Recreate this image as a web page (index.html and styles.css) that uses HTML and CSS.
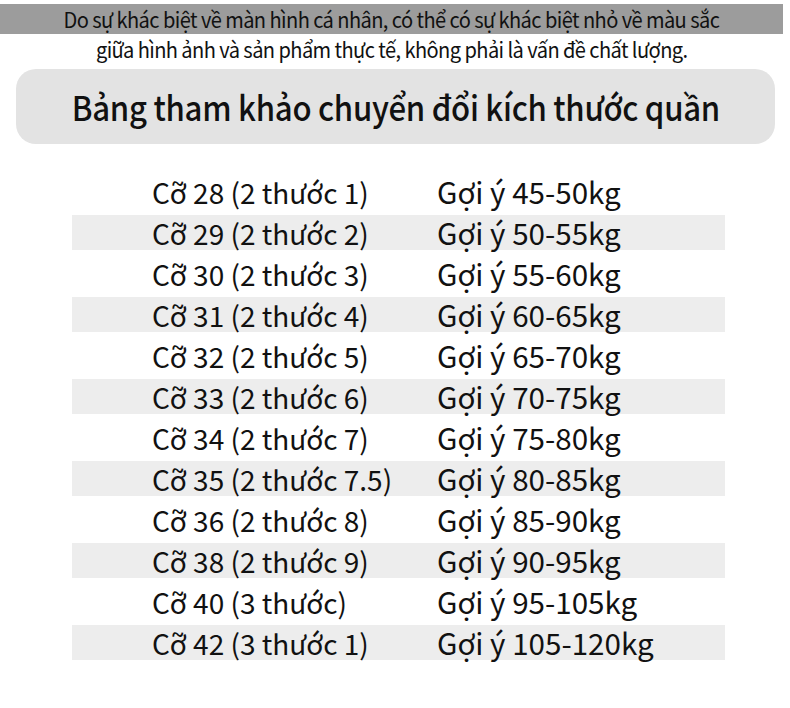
FILE: index.html
```html
<!DOCTYPE html>
<html lang="vi">
<head>
<meta charset="utf-8">
<link rel="stylesheet" href="styles.css">
</head>
<body>
<div class="notice">
  <div class="line line-dark"><span class="squeeze">Do sự khác biệt về màn hình cá nhân, có thể có sự khác biệt nhỏ về màu sắc</span></div>
  <div class="line"><span class="squeeze">giữa hình ảnh và sản phẩm thực tế, không phải là vấn đề chất lượng.</span></div>
</div>
<div class="title-box"><h1 class="title">Bảng tham khảo chuyển đổi kích thước quần</h1></div>
<div class="table">
  <div class="row"><span class="c1">Cỡ 28 (2 thước 1)</span><span class="c2">Gợi ý 45-50kg</span></div>
  <div class="row alt"><span class="c1">Cỡ 29 (2 thước 2)</span><span class="c2">Gợi ý 50-55kg</span></div>
  <div class="row"><span class="c1">Cỡ 30 (2 thước 3)</span><span class="c2">Gợi ý 55-60kg</span></div>
  <div class="row alt"><span class="c1">Cỡ 31 (2 thước 4)</span><span class="c2">Gợi ý 60-65kg</span></div>
  <div class="row"><span class="c1">Cỡ 32 (2 thước 5)</span><span class="c2">Gợi ý 65-70kg</span></div>
  <div class="row alt"><span class="c1">Cỡ 33 (2 thước 6)</span><span class="c2">Gợi ý 70-75kg</span></div>
  <div class="row"><span class="c1">Cỡ 34 (2 thước 7)</span><span class="c2">Gợi ý 75-80kg</span></div>
  <div class="row alt"><span class="c1">Cỡ 35 (2 thước 7.5)</span><span class="c2">Gợi ý 80-85kg</span></div>
  <div class="row"><span class="c1">Cỡ 36 (2 thước 8)</span><span class="c2">Gợi ý 85-90kg</span></div>
  <div class="row alt"><span class="c1">Cỡ 38 (2 thước 9)</span><span class="c2">Gợi ý 90-95kg</span></div>
  <div class="row"><span class="c1">Cỡ 40 (3 thước)</span><span class="c2">Gợi ý 95-105kg</span></div>
  <div class="row alt"><span class="c1">Cỡ 42 (3 thước 1)</span><span class="c2">Gợi ý 105-120kg</span></div>
</div>
</body>
</html>
```
FILE: styles.css
```css
html, body {
  margin: 0;
  padding: 0;
  background: #ffffff;
}
body {
  width: 790px;
  height: 708px;
  overflow: hidden;
  font-family: "Noto Sans CJK JP", "Noto Sans", sans-serif;
  color: #111111;
}
.notice {
  margin-top: 4px;
}
.line {
  height: 30px;
  line-height: 30px;
  font-size: 21px;
  text-align: center;
  letter-spacing: -0.6px;
  width: 783px;
  white-space: nowrap;
}
.squeeze {
  display: inline-block;
  transform: scaleX(0.955);
}
.line-dark {
  background: #9c9c9c;
}
.title-box {
  margin: 5px 15px 0 16px;
  height: 75px;
  border-radius: 20px;
  background: #e3e3e3;
  display: flex;
  align-items: center;
  justify-content: center;
}
.title {
  margin: 0;
  font-size: 34px;
  font-weight: 500;
  letter-spacing: -0.3px;
  white-space: nowrap;
  transform: scaleX(0.916);
}
.table {
  margin: 30px 0 0 72px;
  width: 653px;
  display: flex;
  flex-direction: column;
  gap: 6px;
}
.row {
  height: 35px;
  display: flex;
  align-items: center;
  font-size: 28px;
  padding-left: 80px;
}
.row.alt {
  background: #ededed;
}
.c1 {
  width: 285px;
  flex: none;
}
.c2 {
  font-size: 29.6px;
}
```
